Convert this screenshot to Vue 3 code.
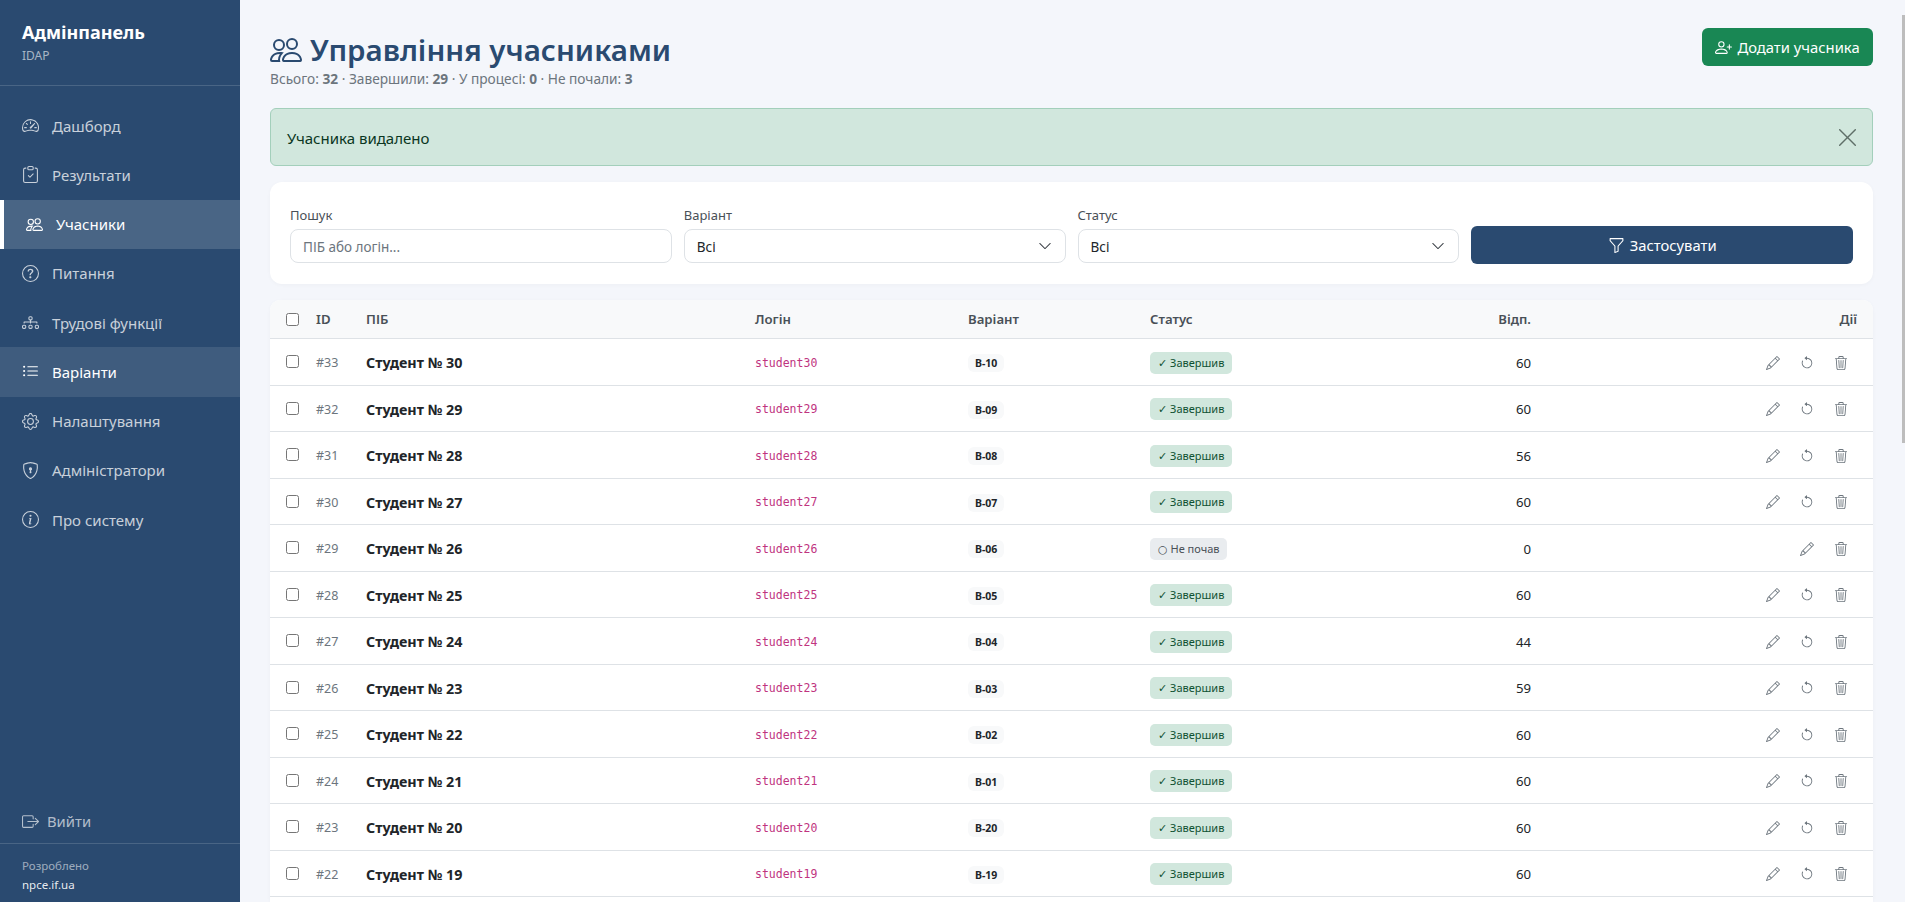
<script setup>
const icons = {
  speed: ['M8 4a.5.5 0 0 1 .5.5V6a.5.5 0 0 1-1 0V4.5A.5.5 0 0 1 8 4M3.732 5.732a.5.5 0 0 1 .707 0l.915.914a.5.5 0 1 1-.708.708l-.914-.915a.5.5 0 0 1 0-.707M2 10a.5.5 0 0 1 .5-.5h1.586a.5.5 0 0 1 0 1H2.5A.5.5 0 0 1 2 10m9.5 0a.5.5 0 0 1 .5-.5h1.5a.5.5 0 0 1 0 1H12a.5.5 0 0 1-.5-.5m.754-4.246a.39.39 0 0 0-.527-.02L7.547 9.31a.91.91 0 1 0 1.302 1.258l3.434-4.297a.39.39 0 0 0-.029-.518z', 'M0 10a8 8 0 1 1 15.547 2.661c-.442 1.253-1.845 1.602-2.932 1.25C11.309 13.488 9.475 13 8 13c-1.474 0-3.31.488-4.615.911-1.087.352-2.49.003-2.932-1.25A8 8 0 0 1 0 10m8-7a7 7 0 0 0-6.603 9.329c.203.575.923.876 1.68.63C4.397 12.533 6.358 12 8 12s3.604.532 4.923.96c.757.245 1.477-.056 1.68-.631A7 7 0 0 0 8 3'],
  clip: ['M10.854 7.146a.5.5 0 0 1 0 .708l-3 3a.5.5 0 0 1-.708 0l-1.5-1.5a.5.5 0 1 1 .708-.708L7.5 9.793l2.646-2.647a.5.5 0 0 1 .708 0', 'M4 1.5H3a2 2 0 0 0-2 2V14a2 2 0 0 0 2 2h10a2 2 0 0 0 2-2V3.5a2 2 0 0 0-2-2h-1v1h1a1 1 0 0 1 1 1V14a1 1 0 0 1-1 1H3a1 1 0 0 1-1-1V3.5a1 1 0 0 1 1-1h1z', 'M9.5 1a.5.5 0 0 1 .5.5v1a.5.5 0 0 1-.5.5h-3a.5.5 0 0 1-.5-.5v-1a.5.5 0 0 1 .5-.5zm-3-1A1.5 1.5 0 0 0 5 1.5v1A1.5 1.5 0 0 0 6.5 4h3A1.5 1.5 0 0 0 11 2.5v-1A1.5 1.5 0 0 0 9.5 0z'],
  people: ['M15 14s1 0 1-1-1-4-5-4-5 3-5 4 1 1 1 1zm-7.978-1L7 12.996c.001-.264.167-1.03.76-1.72C8.312 10.629 9.282 10 11 10c1.717 0 2.687.63 3.24 1.276.593.69.758 1.457.76 1.72l-.008.002-.014.002zM11 7a2 2 0 1 0 0-4 2 2 0 0 0 0 4m3-2a3 3 0 1 1-6 0 3 3 0 0 1 6 0M6.936 9.28a6 6 0 0 0-1.23-.247A7 7 0 0 0 5 9c-4 0-5 3-5 4q0 1 1 1h4.216A2.24 2.24 0 0 1 5 13c0-1.01.377-2.042 1.09-2.904.243-.294.526-.569.846-.816M4.92 10A5.5 5.5 0 0 0 4 13H1c0-.26.164-1.03.76-1.724.545-.636 1.492-1.256 3.16-1.275ZM1.5 5.5a3 3 0 1 1 6 0 3 3 0 0 1-6 0m3-2a2 2 0 1 0 0 4 2 2 0 0 0 0-4'],
  question: ['M8 15A7 7 0 1 1 8 1a7 7 0 0 1 0 14m0 1A8 8 0 1 0 8 0a8 8 0 0 0 0 16', 'M5.255 5.786a.237.237 0 0 0 .241.247h.825c.138 0 .248-.113.266-.25.09-.656.54-1.134 1.342-1.134.686 0 1.314.343 1.314 1.168 0 .635-.374.927-.965 1.371-.673.489-1.206 1.06-1.168 1.987l.003.217a.25.25 0 0 0 .25.246h.811a.25.25 0 0 0 .25-.25v-.105c0-.718.273-.927 1.01-1.486.609-.463 1.244-.977 1.244-2.056 0-1.511-1.276-2.241-2.673-2.241-1.267 0-2.655.59-2.75 2.286m1.557 5.763c0 .533.425.927 1.01.927.609 0 1.028-.394 1.028-.927 0-.552-.42-.94-1.029-.94-.584 0-1.009.388-1.009.94'],
  diagram: ['M6 3.5A1.5 1.5 0 0 1 7.5 2h1A1.5 1.5 0 0 1 10 3.5v1A1.5 1.5 0 0 1 8.5 6v1H14a.5.5 0 0 1 .5.5v1a.5.5 0 0 1-1 0V8h-5v.5a.5.5 0 0 1-1 0V8h-5v.5a.5.5 0 0 1-1 0v-1A.5.5 0 0 1 2 7h5.5V6A1.5 1.5 0 0 1 6 4.5zM8.5 5a.5.5 0 0 0 .5-.5v-1a.5.5 0 0 0-.5-.5h-1a.5.5 0 0 0-.5.5v1a.5.5 0 0 0 .5.5zM0 11.5A1.5 1.5 0 0 1 1.5 10h1A1.5 1.5 0 0 1 4 11.5v1A1.5 1.5 0 0 1 2.5 14h-1A1.5 1.5 0 0 1 0 12.5zm1.5-.5a.5.5 0 0 0-.5.5v1a.5.5 0 0 0 .5.5h1a.5.5 0 0 0 .5-.5v-1a.5.5 0 0 0-.5-.5zm4.5.5A1.5 1.5 0 0 1 7.5 10h1a1.5 1.5 0 0 1 1.5 1.5v1A1.5 1.5 0 0 1 8.5 14h-1A1.5 1.5 0 0 1 6 12.5zm1.5-.5a.5.5 0 0 0-.5.5v1a.5.5 0 0 0 .5.5h1a.5.5 0 0 0 .5-.5v-1a.5.5 0 0 0-.5-.5zm4.5.5a1.5 1.5 0 0 1 1.5-1.5h1a1.5 1.5 0 0 1 1.5 1.5v1a1.5 1.5 0 0 1-1.5 1.5h-1a1.5 1.5 0 0 1-1.5-1.5zm1.5-.5a.5.5 0 0 0-.5.5v1a.5.5 0 0 0 .5.5h1a.5.5 0 0 0 .5-.5v-1a.5.5 0 0 0-.5-.5z'],
  list: ['M5 11.5a.5.5 0 0 1 .5-.5h9a.5.5 0 0 1 0 1h-9a.5.5 0 0 1-.5-.5m0-4a.5.5 0 0 1 .5-.5h9a.5.5 0 0 1 0 1h-9a.5.5 0 0 1-.5-.5m0-4a.5.5 0 0 1 .5-.5h9a.5.5 0 0 1 0 1h-9a.5.5 0 0 1-.5-.5m-3 1a1 1 0 1 0 0-2 1 1 0 0 0 0 2m0 4a1 1 0 1 0 0-2 1 1 0 0 0 0 2m0 4a1 1 0 1 0 0-2 1 1 0 0 0 0 2'],
  gear: ['M8 4.754a3.246 3.246 0 1 0 0 6.492 3.246 3.246 0 0 0 0-6.492M5.754 8a2.246 2.246 0 1 1 4.492 0 2.246 2.246 0 0 1-4.492 0', 'M9.796 1.343c-.527-1.79-3.065-1.79-3.592 0l-.094.319a.873.873 0 0 1-1.255.52l-.292-.16c-1.64-.892-3.433.902-2.54 2.541l.159.292a.873.873 0 0 1-.52 1.255l-.319.094c-1.79.527-1.79 3.065 0 3.592l.319.094a.873.873 0 0 1 .52 1.255l-.16.292c-.892 1.64.901 3.434 2.541 2.54l.292-.159a.873.873 0 0 1 1.255.52l.094.319c.527 1.79 3.065 1.79 3.592 0l.094-.319a.873.873 0 0 1 1.255-.52l.292.16c1.64.893 3.434-.902 2.54-2.541l-.159-.292a.873.873 0 0 1 .52-1.255l.319-.094c1.79-.527 1.79-3.065 0-3.592l-.319-.094a.873.873 0 0 1-.52-1.255l.16-.292c.893-1.64-.902-3.433-2.541-2.54l-.292.159a.873.873 0 0 1-1.255-.52zm-2.633.283c.246-.835 1.428-.835 1.674 0l.094.319a1.873 1.873 0 0 0 2.693 1.115l.291-.16c.764-.415 1.6.42 1.184 1.185l-.159.292a1.873 1.873 0 0 0 1.116 2.692l.318.094c.835.246.835 1.428 0 1.674l-.319.094a1.873 1.873 0 0 0-1.115 2.693l.16.291c.415.764-.42 1.6-1.185 1.184l-.291-.159a1.873 1.873 0 0 0-2.693 1.116l-.094.318c-.246.835-1.428.835-1.674 0l-.094-.319a1.873 1.873 0 0 0-2.692-1.115l-.292.16c-.764.415-1.6-.42-1.184-1.185l.159-.291A1.873 1.873 0 0 0 1.945 8.93l-.319-.094c-.835-.246-.835-1.428 0-1.674l.319-.094A1.873 1.873 0 0 0 3.06 4.377l-.16-.292c-.415-.764.42-1.6 1.185-1.184l.292.159a1.873 1.873 0 0 0 2.692-1.115z'],
  shield: ['M5.338 1.59a61 61 0 0 0-2.837.856.48.48 0 0 0-.328.39c-.554 4.157.726 7.19 2.253 9.188a10.7 10.7 0 0 0 2.287 2.233c.346.244.652.42.893.533q.18.085.293.118a1 1 0 0 0 .101.025 1 1 0 0 0 .1-.025q.114-.034.294-.118c.24-.113.547-.29.893-.533a10.7 10.7 0 0 0 2.287-2.233c1.527-1.997 2.807-5.031 2.253-9.188a.48.48 0 0 0-.328-.39c-.651-.213-1.75-.56-2.837-.855C9.552 1.29 8.531 1.067 8 1.067c-.53 0-1.552.223-2.662.524zM5.072.56C6.157.265 7.31 0 8 0s1.843.265 2.928.56c1.11.3 2.229.655 2.887.87a1.54 1.54 0 0 1 1.044 1.262c.596 4.477-.787 7.795-2.465 9.99a11.8 11.8 0 0 1-2.517 2.453 7 7 0 0 1-1.048.625c-.28.132-.581.24-.829.24s-.548-.108-.829-.24a7 7 0 0 1-1.048-.625 11.8 11.8 0 0 1-2.517-2.453C1.928 10.487.545 7.169 1.141 2.692A1.54 1.54 0 0 1 2.185 1.43 63 63 0 0 1 5.072.56', 'M9.5 6.5a1.5 1.5 0 0 1-1 1.415l.385 1.99a.5.5 0 0 1-.491.595h-.788a.5.5 0 0 1-.49-.595l.384-1.99a1.5 1.5 0 1 1 2-1.415'],
  info: ['M8 15A7 7 0 1 1 8 1a7 7 0 0 1 0 14m0 1A8 8 0 1 0 8 0a8 8 0 0 0 0 16', 'm8.93 6.588-2.29.287-.082.38.45.083c.294.07.352.176.288.469l-.738 3.468c-.194.897.105 1.319.808 1.319.545 0 1.178-.252 1.465-.598l.088-.416c-.2.176-.492.246-.686.246-.275 0-.375-.193-.304-.533zM9 4.5a1 1 0 1 1-2 0 1 1 0 0 1 2 0'],
  logout: ['M10 12.5a.5.5 0 0 1-.5.5h-8a.5.5 0 0 1-.5-.5v-9a.5.5 0 0 1 .5-.5h8a.5.5 0 0 1 .5.5v2a.5.5 0 0 0 1 0v-2A1.5 1.5 0 0 0 9.5 2h-8A1.5 1.5 0 0 0 0 3.5v9A1.5 1.5 0 0 0 1.5 14h8a1.5 1.5 0 0 0 1.5-1.5v-2a.5.5 0 0 0-1 0z', 'M15.854 8.354a.5.5 0 0 0 0-.708l-3-3a.5.5 0 0 0-.708.708L14.293 7.5H5.5a.5.5 0 0 0 0 1h8.793l-2.147 2.146a.5.5 0 0 0 .708.708z'],
  plus: ['M6 8a3 3 0 1 0 0-6 3 3 0 0 0 0 6m2-3a2 2 0 1 1-4 0 2 2 0 0 1 4 0m4 8c0 1-1 1-1 1H1s-1 0-1-1 1-4 6-4 6 3 6 4m-1-.004c-.001-.246-.154-.986-.832-1.664C9.516 10.68 8.289 10 6 10s-3.516.68-4.168 1.332c-.678.678-.83 1.418-.832 1.664z', 'M13.5 5a.5.5 0 0 1 .5.5V7h1.5a.5.5 0 0 1 0 1H14v1.5a.5.5 0 0 1-1 0V8h-1.5a.5.5 0 0 1 0-1H13V5.5a.5.5 0 0 1 .5-.5'],
  funnel: ['M1.5 1.5A.5.5 0 0 1 2 1h12a.5.5 0 0 1 .5.5v2a.5.5 0 0 1-.128.334L10 8.692V13.5a.5.5 0 0 1-.342.474l-3 1A.5.5 0 0 1 6 14.5V8.692L1.628 3.834A.5.5 0 0 1 1.5 3.5zm1 .5v1.308l4.372 4.858A.5.5 0 0 1 7 8.5v5.306l2-.666V8.5a.5.5 0 0 1 .128-.334L13.5 3.308V2z'],
  pencil: ['M12.146.146a.5.5 0 0 1 .708 0l3 3a.5.5 0 0 1 0 .708l-10 10a.5.5 0 0 1-.168.11l-5 2a.5.5 0 0 1-.65-.65l2-5a.5.5 0 0 1 .11-.168zM11.207 2.5 13.5 4.793 14.793 3.5 12.5 1.207zm1.586 3L10.5 3.207 4 9.707V10h.5a.5.5 0 0 1 .5.5v.5h.5a.5.5 0 0 1 .5.5v.5h.293zm-9.761 5.175-.106.106-1.528 3.821 3.821-1.528.106-.106A.5.5 0 0 1 5 12.5V12h-.5a.5.5 0 0 1-.5-.5V11h-.5a.5.5 0 0 1-.468-.325'],
  reset: ['M8 3a5 5 0 1 1-4.546 2.914.5.5 0 0 0-.908-.417A6 6 0 1 0 8 2z', 'M8 4.466V.534a.25.25 0 0 0-.41-.192L5.23 2.308a.25.25 0 0 0 0 .384l2.36 1.966A.25.25 0 0 0 8 4.466'],
  trash: ['M6.5 1h3a.5.5 0 0 1 .5.5v1H6v-1a.5.5 0 0 1 .5-.5M11 2.5v-1A1.5 1.5 0 0 0 9.5 0h-3A1.5 1.5 0 0 0 5 1.5v1H1.5a.5.5 0 0 0 0 1h.538l.853 10.66A2 2 0 0 0 4.885 16h6.23a2 2 0 0 0 1.994-1.84l.853-10.66h.538a.5.5 0 0 0 0-1zm1.958 1-.846 10.58a1 1 0 0 1-.997.92h-6.23a1 1 0 0 1-.997-.92L3.042 3.5zm-7.487 1a.5.5 0 0 1 .528.47l.5 8.5a.5.5 0 0 1-.998.06L5 5.03a.5.5 0 0 1 .47-.53Zm5.058 0a.5.5 0 0 1 .47.53l-.5 8.5a.5.5 0 1 1-.998-.06l.5-8.5a.5.5 0 0 1 .528-.47M8 4.5a.5.5 0 0 1 .5.5v8.5a.5.5 0 0 1-1 0V5a.5.5 0 0 1 .5-.5'],
  chevron: ['M1.646 4.646a.5.5 0 0 1 .708 0L8 10.293l5.646-5.647a.5.5 0 0 1 .708.708l-6 6a.5.5 0 0 1-.708 0l-6-6a.5.5 0 0 1 0-.708'],
  close: ['M2.146 2.854a.5.5 0 1 1 .708-.708L8 7.293l5.146-5.147a.5.5 0 0 1 .708.708L8.707 8l5.147 5.146a.5.5 0 0 1-.708.708L8 8.707l-5.146 5.147a.5.5 0 0 1-.708-.708L7.293 8z']
}

const nav = [
  { label: 'Дашборд', icon: 'speed' },
  { label: 'Результати', icon: 'clip' },
  { label: 'Учасники', icon: 'people', state: 'active' },
  { label: 'Питання', icon: 'question' },
  { label: 'Трудові функції', icon: 'diagram' },
  { label: 'Варіанти', icon: 'list', state: 'hover' },
  { label: 'Налаштування', icon: 'gear' },
  { label: 'Адміністратори', icon: 'shield' },
  { label: 'Про систему', icon: 'info' }
]

const variants = ['10', '09', '08', '07', '06', '05', '04', '03', '02', '01', '20', '19']
const answers = [60, 60, 56, 60, 0, 60, 44, 59, 60, 60, 60, 60]
const rows = variants.map((v, i) => ({
  id: 33 - i,
  name: `Студент № ${30 - i}`,
  login: `student${30 - i}`,
  variant: `В-${v}`,
  answers: answers[i],
  done: answers[i] > 0
}))
</script>

<template>
  <div class="layout">
    <aside class="sidebar">
      <div class="brand">
        <div class="brand-title">Адмінпанель</div>
        <div class="brand-sub">IDAP</div>
      </div>
      <nav class="nav">
        <a v-for="item in nav" :key="item.label" class="nav-item" :class="item.state">
          <svg class="nav-icon" viewBox="0 0 16 16" fill="currentColor"><path v-for="d in icons[item.icon]" :key="d" :d="d" /></svg>
          <span>{{ item.label }}</span>
        </a>
      </nav>
      <a class="logout">
        <svg class="nav-icon" viewBox="0 0 16 16" fill="currentColor"><path v-for="d in icons.logout" :key="d" :d="d" /></svg>
        <span>Вийти</span>
      </a>
      <div class="credit">
        <div class="credit-label">Розроблено</div>
        <div class="credit-link">npce.if.ua</div>
      </div>
    </aside>

    <main class="main">
      <header class="page-head">
        <div>
          <h1 class="title">
            <svg class="title-icon" viewBox="0 0 16 16" fill="currentColor"><path v-for="d in icons.people" :key="d" :d="d" /></svg>
            Управління учасниками
          </h1>
          <div class="stats">Всього: <b>32</b> · Завершили: <b>29</b> · У процесі: <b>0</b> · Не почали: <b>3</b></div>
        </div>
        <button class="btn btn-add">
          <svg class="btn-icon" viewBox="0 0 16 16" fill="currentColor"><path v-for="d in icons.plus" :key="d" :d="d" /></svg>
          Додати учасника
        </button>
      </header>

      <div class="alert">
        <span>Учасника видалено</span>
        <svg class="alert-close" viewBox="2 2 12 12" fill="currentColor"><path :d="icons.close[0]" /></svg>
      </div>

      <section class="filters">
        <label class="field">
          <span class="field-label">Пошук</span>
          <input class="control" type="text" placeholder="ПІБ або логін..." />
        </label>
        <div class="field">
          <span class="field-label">Варіант</span>
          <div class="control select">Всі
            <svg class="chev" viewBox="0 0 16 16" fill="currentColor"><path :d="icons.chevron[0]" /></svg>
          </div>
        </div>
        <div class="field">
          <span class="field-label">Статус</span>
          <div class="control select">Всі
            <svg class="chev" viewBox="0 0 16 16" fill="currentColor"><path :d="icons.chevron[0]" /></svg>
          </div>
        </div>
        <button class="btn btn-apply">
          <svg class="btn-icon" viewBox="0 0 16 16" fill="currentColor"><path :d="icons.funnel[0]" /></svg>
          Застосувати
        </button>
      </section>

      <section class="table-card">
        <table class="table">
          <colgroup>
            <col class="c1" /><col class="c2" /><col class="c3" /><col class="c4" />
            <col class="c5" /><col class="c6" /><col class="c7" /><col />
          </colgroup>
          <thead>
            <tr>
              <th><input type="checkbox" class="check" /></th>
              <th>ID</th>
              <th>ПІБ</th>
              <th>Логін</th>
              <th>Варіант</th>
              <th>Статус</th>
              <th class="right">Відп.</th>
              <th class="right">Дії</th>
            </tr>
          </thead>
          <tbody>
            <tr v-for="r in rows" :key="r.id">
              <td><input type="checkbox" class="check" /></td>
              <td class="id">#{{ r.id }}</td>
              <td class="name">{{ r.name }}</td>
              <td class="login">{{ r.login }}</td>
              <td><span class="variant">{{ r.variant }}</span></td>
              <td>
                <span v-if="r.done" class="status done"><span class="mark">✓</span> Завершив</span>
                <span v-else class="status none"><span class="mark">○</span> Не почав</span>
              </td>
              <td class="right num">{{ r.answers }}</td>
              <td class="right">
                <div class="actions">
                  <svg class="act" viewBox="0 0 16 16" fill="currentColor"><path :d="icons.pencil[0]" /></svg>
                  <svg v-if="r.done" class="act" viewBox="0 0 16 16" fill="currentColor"><path v-for="d in icons.reset" :key="d" :d="d" /></svg>
                  <svg class="act" viewBox="0 0 16 16" fill="currentColor"><path :d="icons.trash[0]" /></svg>
                </div>
              </td>
            </tr>
          </tbody>
        </table>
      </section>
    </main>
    <div class="scroll-thumb"></div>
  </div>
</template>

<style scoped>
.layout {
  position: relative;
  display: flex;
  height: 100vh;
  overflow: hidden;
  background: #f4f6fb;
  color: #212529;
  font-family: "Noto Sans", "Open Sans", sans-serif;
  font-size: 14px;
}
.scroll-thumb {
  position: absolute;
  top: 15px;
  right: 0;
  width: 3px;
  height: 428px;
  background: #bdbdbd;
}
.sidebar {
  flex: 0 0 240px;
  width: 240px;
  display: flex;
  flex-direction: column;
  background: #2a4a70;
  color: rgba(255, 255, 255, 0.75);
}
.brand {
  height: 86px;
  box-sizing: border-box;
  padding: 19px 22px 0;
  border-bottom: 1px solid rgba(255, 255, 255, 0.15);
}
.brand-title { color: #fff; font-size: 18px; font-weight: 700; line-height: 26px; }
.brand-sub { color: rgba(255, 255, 255, 0.6); font-size: 12px; line-height: 22px; }
.nav { flex: 1; padding-top: 15px; }
.nav-item {
  display: flex;
  align-items: center;
  gap: 13px;
  height: 49.25px;
  box-sizing: border-box;
  padding-left: 22px;
  font-size: 15px;
}
.nav-item.active {
  border-left: 4px solid #fff;
  background: rgba(255, 255, 255, 0.15);
  color: #fff;
}
.nav-item.hover { background: rgba(255, 255, 255, 0.1); color: #fff; }
.nav-icon { width: 17px; height: 17px; flex: none; }
.logout {
  display: flex;
  align-items: center;
  gap: 8px;
  height: 44px;
  padding-left: 22px;
  font-size: 14.8px;
  color: rgba(255, 255, 255, 0.65);
  border-bottom: 1px solid rgba(255, 255, 255, 0.15);
}
.credit { padding: 13px 22px 0; height: 58px; box-sizing: border-box; font-size: 11.5px; line-height: 18px; }
.credit-label { color: rgba(255, 255, 255, 0.55); }
.credit-link { color: rgba(255, 255, 255, 0.9); margin-top: 1px; }

.main {
  flex: 1;
  min-width: 0;
  display: flex;
  flex-direction: column;
  padding: 28px 32px 0 30px;
}
.page-head { flex: none; display: flex; justify-content: space-between; align-items: flex-start; height: 80px; }
.title {
  margin: 0;
  display: flex;
  align-items: center;
  gap: 8px;
  color: #2a4a70;
  font-size: 29.5px;
  font-weight: 600;
  line-height: 44px;
}
.title-icon { width: 32px; height: 32px; }
.stats { color: #6c757d; font-size: 13.7px; line-height: 13px; }
.stats b { font-weight: 700; color: #6c757d; }

.btn {
  display: flex;
  align-items: center;
  justify-content: center;
  gap: 5px;
  border: 0;
  border-radius: 6px;
  color: #fff;
  font-family: inherit;
  font-size: 14.8px;
}
.btn-add { background: #198754; width: 171px; height: 38px; }
.btn-icon { width: 17px; height: 17px; }

.alert {
  flex: none;
  display: flex;
  justify-content: space-between;
  align-items: center;
  height: 58px;
  box-sizing: border-box;
  padding: 0 16px;
  border: 1px solid #a3cfbb;
  border-radius: 6px;
  background: #d1e7dd;
  color: #0a3622;
  font-size: 15px;
}
.alert span { padding-top: 2px; }
.alert-close { width: 17px; height: 17px; color: #5f6f68; }

.filters {
  flex: none;
  margin-top: 16px;
  display: grid;
  grid-template-columns: repeat(4, 1fr);
  gap: 12px;
  align-items: end;
  padding: 24px 20px 21px;
  background: #fff;
  border-radius: 12px;
  box-shadow: 0 1px 4px rgba(0, 0, 0, 0.03);
}
.field { display: flex; flex-direction: column; }
.field-label { color: #495057; font-size: 13px; line-height: 18px; margin-bottom: 5px; }
.control {
  height: 34px;
  box-sizing: border-box;
  padding: 2px 12px 0;
  border: 1px solid #dee2e6;
  border-radius: 8px;
  background: #fff;
  color: #212529;
  font-family: inherit;
  font-size: 13.5px;
  outline: none;
}
.control::placeholder { color: #6c757d; opacity: 1; }
.select { display: flex; align-items: center; justify-content: space-between; }
.chev { width: 14px; height: 14px; color: #343a40; margin: -2px 1px 0 0; }
.btn-apply { height: 38px; background: #2a4a70; margin-bottom: -1px; }

.table-card {
  flex: 1;
  margin-top: 16px;
  background: #fff;
  border-radius: 10px 10px 0 0;
  overflow: hidden;
  box-shadow: 0 1px 4px rgba(0, 0, 0, 0.03);
}
.table { width: 100%; table-layout: fixed; border-collapse: collapse; }
.c1 { width: 30px; } .c2 { width: 50px; } .c3 { width: 389px; } .c4 { width: 213px; }
.c5 { width: 182px; } .c6 { width: 200px; } .c7 { width: 213px; }
th, td { padding: 0 0 0 16px; border-bottom: 1px solid #dee2e6; vertical-align: middle; text-align: left; }
th { height: 38px; background: #f8f9fa; color: #495057; font-size: 13.2px; font-weight: 600; }
td { height: 46.5px; box-sizing: border-box; padding-top: 2px; font-size: 13.5px; }
.right { text-align: right; padding-right: 16px; }
.check { display: block; margin: 0; width: 13px; height: 13px; }
td .check { margin-top: -2px; }
.id { color: #6c757d; font-size: 12.5px; }
.name { font-weight: 700; color: #212529; font-size: 14.3px; }
.login { font-family: "DejaVu Sans Mono", monospace; font-size: 11.5px; color: #c0347f; }
.variant {
  display: inline-block;
  padding: 0 7px;
  line-height: 18px;
  border-radius: 6px;
  background: #f8f9fa;
  font-size: 10.5px;
  font-weight: 700;
}
.status { display: inline-block; padding: 0 8px; line-height: 21px; border-radius: 5px; font-size: 11px; }
.status.done { background: #d1e7dd; color: #0f5132; }
.status.none { background: #e9ecef; color: #495057; }
.mark { font-family: "DejaVu Sans", sans-serif; }
.num { font-size: 13.2px; }
.actions { display: flex; justify-content: flex-end; gap: 20px; padding-right: 9px; color: #6c757d; }
.act { width: 14px; height: 14px; }
</style>
